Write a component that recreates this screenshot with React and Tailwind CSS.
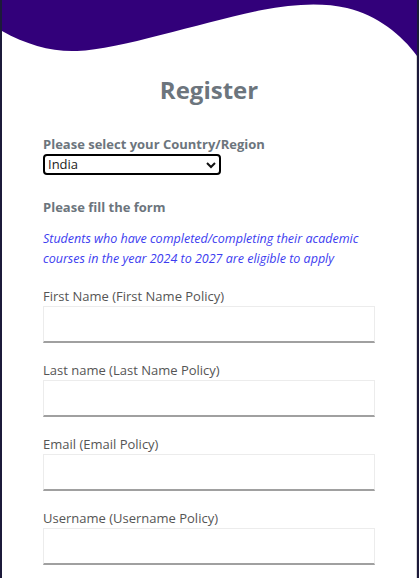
export default function App() {
	const fields = [
		"First Name (First Name Policy)",
		"Last name (Last Name Policy)",
		"Email (Email Policy)",
		"Username (Username Policy)",
	];

	return (
		<div
			className="w-[419px] h-[578px] bg-[#1c1a3a] flex overflow-hidden"
			style={{ fontFamily: '"Open Sans", "Liberation Sans", sans-serif' }}
		>
			<div className="ml-[2px] w-[415px] h-full bg-white border-r border-[#d9d9d9] flex flex-col">
				{/* Wave header */}
				<svg width="415" height="56" viewBox="0 0 415 56" className="block shrink-0">
					<path
						d="M0 0 L0 31 C 25 45, 50 52, 75 51 C 120 49, 200 22, 260 10 C 290 4, 320 2, 345 8 C 375 15, 400 35, 415 56 L415 0 Z"
						fill="#32007a"
					/>
				</svg>

				<h1 className="mt-[18px] text-center text-[24px] leading-[32px] font-bold text-[#6c757d]">
					Register
				</h1>

				<div className="px-[41px] pt-[29px] flex flex-col">
					<p className="text-[13px] leading-[18px] font-bold text-[#6c757d]">
						Please select your Country/Region
					</p>
					<div className="mt-[1px] w-[178px] h-[21px] border-2 border-black rounded-[4px] flex items-center justify-between pl-[3px] pr-[3px]">
						<span className="text-[13px] leading-none text-[#222]">India</span>
						<svg width="10" height="8" viewBox="0 0 10 8">
							<path d="M1 2 L5 6 L9 2" stroke="#111" strokeWidth="2" fill="none" />
						</svg>
					</div>

					<p className="mt-[23px] text-[13px] leading-[18px] font-bold text-[#6c757d]">
						Please fill the form
					</p>

					<p className="mt-[13px] text-[12.5px] leading-[20px] italic text-[#3c3cf0]">
						Students who have completed/completing their academic
						<br />
						courses in the year 2024 to 2027 are eligible to apply
					</p>

					<div className="mt-[18px] flex flex-col gap-[18px]">
						{fields.map((label) => (
							<div key={label} className="flex flex-col">
								<label className="text-[13px] leading-[18px] text-[#555]">{label}</label>
								<div className="mt-[1px] w-[332px] h-[37px] border border-[#ececec] border-b-2 border-b-[#a0a0a0]"></div>
							</div>
						))}
					</div>
				</div>
			</div>
		</div>
	);
}
